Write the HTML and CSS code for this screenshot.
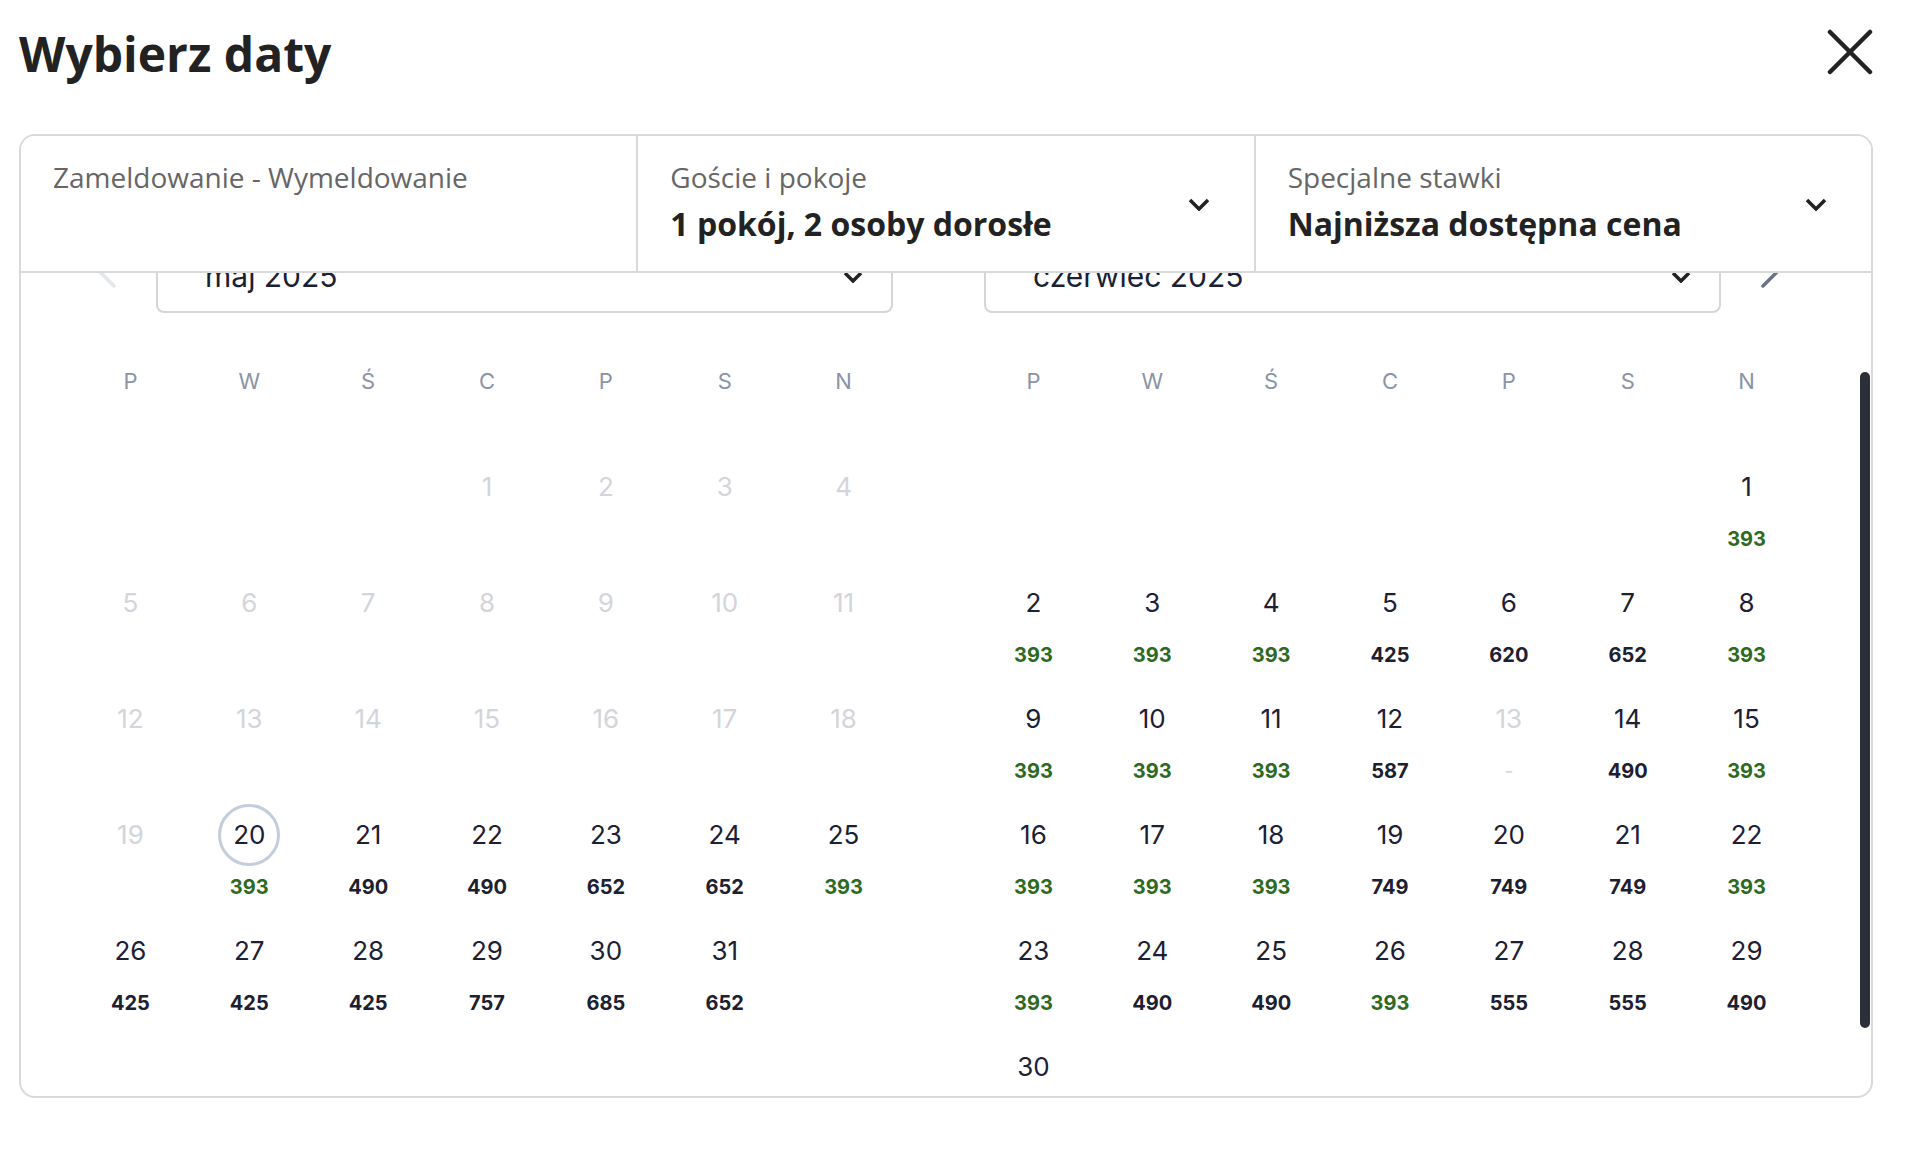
FILE: index.html
```html
<!DOCTYPE html>
<html lang="pl">
<head>
  <meta charset="UTF-8">
  <meta name="viewport" content="width=device-width, initial-scale=1.0">
  <title>Wybierz daty</title>
  <link rel="stylesheet" href="styles.css">
</head>
<body>
  <div class="modal">
    <div class="modal-head">
      <h1 class="modal-title">Wybierz daty</h1>
      <div class="close-btn">
        <svg width="46" height="46" viewBox="0 0 46 46"><path d="M3 3 L43 43 M43 3 L3 43" stroke="#222" stroke-width="4.5" stroke-linecap="round" fill="none"/></svg>
      </div>
    </div>

    <div class="booking">
      <div class="fields">
        <div class="field">
          <div class="field-text">
            <div class="field-label">Zameldowanie - Wymeldowanie</div>
          </div>
        </div>
        <div class="field">
          <div class="field-text">
            <div class="field-label">Goście i pokoje</div>
            <div class="field-value">1 pokój, 2 osoby dorosłe</div>
          </div>
          <svg class="chevron" width="22" height="13" viewBox="0 0 22 13"><path d="M2 2 L11 11 L20 2" stroke="#222" stroke-width="3.5" fill="none"/></svg>
        </div>
        <div class="field">
          <div class="field-text">
            <div class="field-label">Specjalne stawki</div>
            <div class="field-value">Najniższa dostępna cena</div>
          </div>
          <svg class="chevron" width="22" height="13" viewBox="0 0 22 13"><path d="M2 2 L11 11 L20 2" stroke="#222" stroke-width="3.5" fill="none"/></svg>
        </div>
      </div>

      <div class="calendar">
        <div class="months">
          <!-- maj -->
          <div class="month">
            <div class="month-nav">
              <div class="arrow">
                <svg width="18" height="32" viewBox="0 0 18 32"><path d="M16 2 L2 16 L16 30" stroke="#e3e6eb" stroke-width="3.5" stroke-linecap="round" fill="none"/></svg>
              </div>
              <div class="month-select first">
                <span>maj 2025</span>
                <svg width="20" height="12" viewBox="0 0 20 12"><path d="M2 2 L10 10 L18 2" stroke="#222" stroke-width="3.5" fill="none"/></svg>
              </div>
            </div>
            <div class="weekdays">
              <span>P</span><span>W</span><span>Ś</span><span>C</span><span>P</span><span>S</span><span>N</span>
            </div>
            <div class="days">
              <div class="day"></div><div class="day"></div><div class="day"></div>
              <div class="day off"><span class="num">1</span></div>
              <div class="day off"><span class="num">2</span></div>
              <div class="day off"><span class="num">3</span></div>
              <div class="day off"><span class="num">4</span></div>
              <div class="day off"><span class="num">5</span></div>
              <div class="day off"><span class="num">6</span></div>
              <div class="day off"><span class="num">7</span></div>
              <div class="day off"><span class="num">8</span></div>
              <div class="day off"><span class="num">9</span></div>
              <div class="day off"><span class="num">10</span></div>
              <div class="day off"><span class="num">11</span></div>
              <div class="day off"><span class="num">12</span></div>
              <div class="day off"><span class="num">13</span></div>
              <div class="day off"><span class="num">14</span></div>
              <div class="day off"><span class="num">15</span></div>
              <div class="day off"><span class="num">16</span></div>
              <div class="day off"><span class="num">17</span></div>
              <div class="day off"><span class="num">18</span></div>
              <div class="day off"><span class="num">19</span></div>
              <div class="day"><span class="num today">20</span><span class="price low">393</span></div>
              <div class="day"><span class="num">21</span><span class="price">490</span></div>
              <div class="day"><span class="num">22</span><span class="price">490</span></div>
              <div class="day"><span class="num">23</span><span class="price">652</span></div>
              <div class="day"><span class="num">24</span><span class="price">652</span></div>
              <div class="day"><span class="num">25</span><span class="price low">393</span></div>
              <div class="day"><span class="num">26</span><span class="price">425</span></div>
              <div class="day"><span class="num">27</span><span class="price">425</span></div>
              <div class="day"><span class="num">28</span><span class="price">425</span></div>
              <div class="day"><span class="num">29</span><span class="price">757</span></div>
              <div class="day"><span class="num">30</span><span class="price">685</span></div>
              <div class="day"><span class="num">31</span><span class="price">652</span></div>
            </div>
          </div>

          <!-- czerwiec -->
          <div class="month">
            <div class="month-nav">
              <div class="month-select second">
                <span>czerwiec 2025</span>
                <svg width="20" height="12" viewBox="0 0 20 12"><path d="M2 2 L10 10 L18 2" stroke="#222" stroke-width="3.5" fill="none"/></svg>
              </div>
              <div class="arrow">
                <svg width="18" height="32" viewBox="0 0 18 32"><path d="M2 2 L16 16 L2 30" stroke="#6b7487" stroke-width="3.5" stroke-linecap="round" fill="none"/></svg>
              </div>
            </div>
            <div class="weekdays">
              <span>P</span><span>W</span><span>Ś</span><span>C</span><span>P</span><span>S</span><span>N</span>
            </div>
            <div class="days">
              <div class="day"></div><div class="day"></div><div class="day"></div>
              <div class="day"></div><div class="day"></div><div class="day"></div>
              <div class="day"><span class="num">1</span><span class="price low">393</span></div>
              <div class="day"><span class="num">2</span><span class="price low">393</span></div>
              <div class="day"><span class="num">3</span><span class="price low">393</span></div>
              <div class="day"><span class="num">4</span><span class="price low">393</span></div>
              <div class="day"><span class="num">5</span><span class="price">425</span></div>
              <div class="day"><span class="num">6</span><span class="price">620</span></div>
              <div class="day"><span class="num">7</span><span class="price">652</span></div>
              <div class="day"><span class="num">8</span><span class="price low">393</span></div>
              <div class="day"><span class="num">9</span><span class="price low">393</span></div>
              <div class="day"><span class="num">10</span><span class="price low">393</span></div>
              <div class="day"><span class="num">11</span><span class="price low">393</span></div>
              <div class="day"><span class="num">12</span><span class="price">587</span></div>
              <div class="day off"><span class="num">13</span><span class="price none">-</span></div>
              <div class="day"><span class="num">14</span><span class="price">490</span></div>
              <div class="day"><span class="num">15</span><span class="price low">393</span></div>
              <div class="day"><span class="num">16</span><span class="price low">393</span></div>
              <div class="day"><span class="num">17</span><span class="price low">393</span></div>
              <div class="day"><span class="num">18</span><span class="price low">393</span></div>
              <div class="day"><span class="num">19</span><span class="price">749</span></div>
              <div class="day"><span class="num">20</span><span class="price">749</span></div>
              <div class="day"><span class="num">21</span><span class="price">749</span></div>
              <div class="day"><span class="num">22</span><span class="price low">393</span></div>
              <div class="day"><span class="num">23</span><span class="price low">393</span></div>
              <div class="day"><span class="num">24</span><span class="price">490</span></div>
              <div class="day"><span class="num">25</span><span class="price">490</span></div>
              <div class="day"><span class="num">26</span><span class="price low">393</span></div>
              <div class="day"><span class="num">27</span><span class="price">555</span></div>
              <div class="day"><span class="num">28</span><span class="price">555</span></div>
              <div class="day"><span class="num">29</span><span class="price">490</span></div>
              <div class="day"><span class="num">30</span><span class="price">490</span></div>
            </div>
          </div>
        </div>

        <div class="scroll-thumb"></div>
      </div>
    </div>
  </div>
</body>
</html>
```

FILE: styles.css
```css
* {
  margin: 0;
  padding: 0;
  box-sizing: border-box;
}

body {
  font-family: "Open Sans", "Liberation Sans", sans-serif;
  color: #222;
  background: #fff;
  overflow: hidden;
}

.modal {
  padding: 20px 49px 0 19px;
}

.modal-head {
  display: flex;
  justify-content: space-between;
  align-items: center;
}

.modal-title {
  font-size: 48px;
  font-weight: 700;
  line-height: 68px;
  color: #222;
}

.close-btn {
  width: 46px;
  height: 46px;
  margin-top: -4px;
}

.booking {
  margin-top: 46px;
  height: 964px;
  border: 2px solid #d9d9d9;
  border-radius: 16px;
  display: flex;
  flex-direction: column;
  overflow: hidden;
}

/* pola u góry */
.fields {
  display: flex;
  height: 137px;
  border-bottom: 2px solid #d9d9d9;
  position: relative;
  z-index: 1;
  background: #fff;
}

.field {
  flex: 1;
  display: flex;
  justify-content: space-between;
  align-items: center;
  padding: 0 44px 0 32px;
  border-right: 2px solid #d9d9d9;
}

.field:last-child {
  border-right: none;
}

.field-text {
  align-self: flex-start;
  padding-top: 22px;
}

.field-label {
  font-size: 28px;
  line-height: 38px;
  color: #666;
}

.field-value {
  font-size: 32px;
  font-weight: 700;
  line-height: 40px;
  margin-top: 8px;
  color: #222;
}

.chevron {
  margin-top: 2px;
}

/* kalendarz */
.calendar {
  flex: 1;
  position: relative;
  overflow: hidden;
  font-family: Inter, "Liberation Sans", sans-serif;
}

.months {
  display: flex;
  gap: 71px;
  padding: 0 65px 0 50px;
  margin-top: -32px;
}

.month {
  flex: 1;
}

.month-nav {
  display: flex;
  align-items: center;
  height: 72px;
}

.arrow {
  width: 72px;
  display: flex;
  justify-content: center;
  margin-bottom: 10px;
}

.month-select {
  flex: 1;
  height: 72px;
  border: 2px solid #d6d6d6;
  border-radius: 8px;
  display: flex;
  align-items: center;
  justify-content: space-between;
  padding: 0 28px 0 47px;
  font-size: 30px;
  color: #1a1f36;
}

.month-select span {
  margin-top: -2px;
}

.month-select.first {
  margin: 0 10px 0 13px;
}

.month-select.second {
  margin: 0 13px 0 10px;
}

.weekdays {
  display: grid;
  grid-template-columns: repeat(7, 1fr);
  margin-top: 53px;
  font-size: 22px;
  line-height: 30px;
  color: #8a94a6;
  text-align: center;
}

.days {
  display: grid;
  grid-template-columns: repeat(7, 1fr);
  margin-top: 60px;
}

.day {
  height: 116px;
  display: flex;
  flex-direction: column;
  align-items: center;
}

.num {
  width: 62px;
  height: 62px;
  line-height: 62px;
  border-radius: 50%;
  text-align: center;
  font-size: 26px;
  color: #1b2034;
}

.num.today {
  border: 3px solid #c3cddc;
  line-height: 56px;
}

.day.off .num {
  color: #d3d5da;
}

.price {
  margin-top: 9px;
  font-size: 20px;
  font-weight: 700;
  line-height: 24px;
  color: #1c2030;
}

.price.low {
  color: #2d6a1f;
}

.price.none {
  color: #d3d5da;
  font-weight: 400;
}

.scroll-thumb {
  position: absolute;
  right: 1px;
  top: 99px;
  width: 10px;
  height: 656px;
  border-radius: 5px;
  background: #2b3038;
}
```
